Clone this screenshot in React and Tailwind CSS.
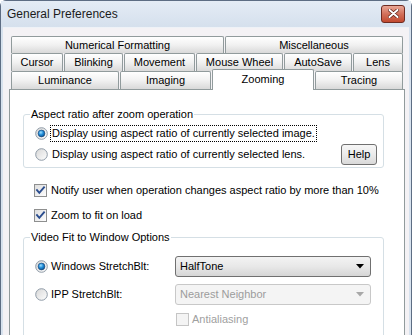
import React from 'react';

function Tab({ label, w, active }) {
  if (active) {
    return (
      <div
        className={`${w} relative z-10 h-[21px] -mb-[1px] flex items-start justify-center pt-[3px] border-t border-l border-r border-[#919b9c] rounded-t-[2px] bg-white`}
      >
        {label}
      </div>
    );
  }
  return (
    <div
      className={`${w} h-full flex items-center justify-center border-t border-l border-r border-[#919b9c] rounded-t-[2px] bg-linear-to-b from-white via-[#f1f1f1] to-[#d9d9d9]`}
    >
      {label}
    </div>
  );
}

function Radio({ checked }) {
  return (
    <svg width="13" height="13" viewBox="0 0 13 13" className="shrink-0">
      <defs>
        <linearGradient id="rbg" x1="0" y1="0" x2="1" y2="1">
          <stop offset="0" stopColor="#d6d6d6" />
          <stop offset="1" stopColor="#ffffff" />
        </linearGradient>
        <radialGradient id="rdot" cx="0.4" cy="0.35" r="0.7">
          <stop offset="0" stopColor="#9fe0ff" />
          <stop offset="0.5" stopColor="#1d8ad8" />
          <stop offset="1" stopColor="#0a4f8a" />
        </radialGradient>
      </defs>
      <circle cx="6.5" cy="6.5" r="5.8" fill="url(#rbg)" stroke="#8f9ba7" strokeWidth="1" />
      {checked && <circle cx="6.5" cy="6.5" r="3.4" fill="url(#rdot)" stroke="#1b3f6e" strokeWidth="0.6" />}
    </svg>
  );
}

function Check({ checked, disabled }) {
  return (
    <svg width="13" height="13" viewBox="0 0 13 13" className="shrink-0">
      <defs>
        <linearGradient id="cbg" x1="0" y1="0" x2="1" y2="1">
          <stop offset="0" stopColor="#dcdcdc" />
          <stop offset="1" stopColor="#ffffff" />
        </linearGradient>
      </defs>
      <rect
        x="0.5"
        y="0.5"
        width="12"
        height="12"
        fill={disabled ? '#f4f4f4' : 'url(#cbg)'}
        stroke={disabled ? '#c5c5c5' : '#8e8f8f'}
      />
      {checked && (
        <path d="M3 6.2 L5.3 8.8 L10 3.4" fill="none" stroke="#2b4d8e" strokeWidth="1.9" strokeLinecap="square" />
      )}
    </svg>
  );
}

function Arrow({ color }) {
  return (
    <svg width="8" height="5" viewBox="0 0 8 5">
      <path d="M0 0 H8 L4 4.5 Z" fill={color} />
    </svg>
  );
}

export default function App() {
  return (
    <div className="w-[416px] h-[335px] overflow-hidden bg-white font-['Liberation_Sans',Arial,sans-serif] text-[11px] leading-[13px] text-black">
      <div className="w-[412px] h-[345px] flex flex-col rounded-t-[6px] border border-[#5d6d83] bg-[#d7e2ee]">
        {/* title bar */}
        <div className="h-[26px] shrink-0 flex items-center justify-between pl-[6px] pr-[6px] bg-linear-to-b from-[#e4ecf5] to-[#d5e0ed]">
          <span className="text-[12px] text-[#1b1b1b]">General Preferences</span>
          <div className="w-[24px] h-[18px] -mt-[1px] flex items-center justify-center rounded-[3px] border border-[#6e2c22] bg-linear-to-b from-[#e9a796] via-[#d2705a] to-[#c2492f]">
            <svg width="11" height="9" viewBox="0 0 11 9">
              <path d="M1.5 1 L9.5 8 M9.5 1 L1.5 8" stroke="#5a1d14" strokeWidth="3.4" strokeLinecap="round" />
              <path d="M1.5 1 L9.5 8 M9.5 1 L1.5 8" stroke="#ffffff" strokeWidth="2" strokeLinecap="round" />
            </svg>
          </div>
        </div>

        {/* dialog body */}
        <div className="flex-1 mx-[2px] pt-[8px] pl-[6px] bg-[#f4f2f5] border-t border-[#eef2f7]">
          {/* tabs */}
          <div className="ml-[2px] w-[392px] flex flex-col">
            <div className="h-[17px] flex gap-[1px]">
              <Tab label="Numerical Formatting" w="w-[213px]" />
              <Tab label="Miscellaneous" w="w-[178px]" />
            </div>
            <div className="h-[18px] flex gap-[1px]">
              <Tab label="Cursor" w="w-[52px]" />
              <Tab label="Blinking" w="w-[59px]" />
              <Tab label="Movement" w="w-[71px]" />
              <Tab label="Mouse Wheel" w="w-[87px]" />
              <Tab label="AutoSave" w="w-[68px]" />
              <Tab label="Lens" w="w-[50px]" />
            </div>
            <div className="h-[18px] flex items-end gap-[1px]">
              <Tab label="Luminance" w="w-[108px] h-[18px]" />
              <Tab label="Imaging" w="w-[91px] h-[18px]" />
              <Tab label="Zooming" w="w-[102px]" active />
              <Tab label="Tracing" w="w-[88px] h-[18px]" />
            </div>
          </div>

          {/* panel */}
          <div className="w-[396px] h-[260px] border border-[#919b9c] bg-white pl-[13px] pt-[24px]">
            {/* group 1 */}
            <div className="relative w-[361px] border border-[#d5dfe5] rounded-[3px] pl-[11px] pr-[6px] pt-[10px] pb-[2px]">
              <span className="absolute -top-[7px] left-[6px] bg-white px-[1px]">Aspect ratio after zoom operation</span>
              <div className="h-[17px] flex items-center">
                <Radio checked />
                <span className="ml-[2px] px-[1px] h-[17px] flex items-center border border-dotted border-black">
                  Display using aspect ratio of currently selected image.
                </span>
              </div>
              <div className="mt-[2px] h-[21px] flex items-center justify-between">
                <div className="flex items-center">
                  <Radio />
                  <span className="ml-[4px]">Display using aspect ratio of currently selected lens.</span>
                </div>
                <button className="w-[36px] h-[21px] flex items-center justify-center rounded-[3px] border border-[#707070] bg-linear-to-b from-[#f6f6f6] via-[#ebebeb] to-[#d9d9d9]">
                  Help
                </button>
              </div>
            </div>

            {/* checkboxes */}
            <div className="mt-[14px] h-[17px] pl-[11px] flex items-center">
              <Check checked />
              <span className="ml-[4px]">Notify user when operation changes aspect ratio by more than 10%</span>
            </div>
            <div className="mt-[8px] h-[17px] pl-[11px] flex items-center">
              <Check checked />
              <span className="ml-[4px]">Zoom to fit on load</span>
            </div>

            {/* group 2 */}
            <div className="relative mt-[13px] w-[361px] h-[120px] border border-[#d5dfe5] rounded-[3px] pl-[11px] pt-[18px]">
              <span className="absolute -top-[7px] left-[6px] bg-white px-[1px]">Video Fit to Window Options</span>
              <div className="h-[21px] flex items-center">
                <div className="w-[140px] flex items-center">
                  <Radio checked />
                  <span className="ml-[3px]">Windows StretchBlt:</span>
                </div>
                <div className="w-[196px] h-[21px] flex items-center justify-between pl-[4px] pr-[6px] rounded-[3px] border border-[#707070] bg-linear-to-b from-[#f3f3f3] via-[#e8e8e8] to-[#d6d6d6]">
                  <span>HalfTone</span>
                  <Arrow color="#000000" />
                </div>
              </div>
              <div className="mt-[7px] h-[21px] flex items-center">
                <div className="w-[140px] flex items-center">
                  <Radio />
                  <span className="ml-[3px]">IPP StretchBlt:</span>
                </div>
                <div className="w-[196px] h-[21px] flex items-center justify-between pl-[4px] pr-[6px] rounded-[3px] border border-[#c8c8c8] bg-[#f4f4f4] text-[#9c9c9c]">
                  <span>Nearest Neighbor</span>
                  <Arrow color="#a8a8a8" />
                </div>
              </div>
              <div className="mt-[8px] h-[13px] flex items-center pl-[141px]">
                <Check disabled />
                <span className="ml-[3px] text-[#a0a0a0]">Antialiasing</span>
              </div>
            </div>
          </div>
        </div>
      </div>
    </div>
  );
}
